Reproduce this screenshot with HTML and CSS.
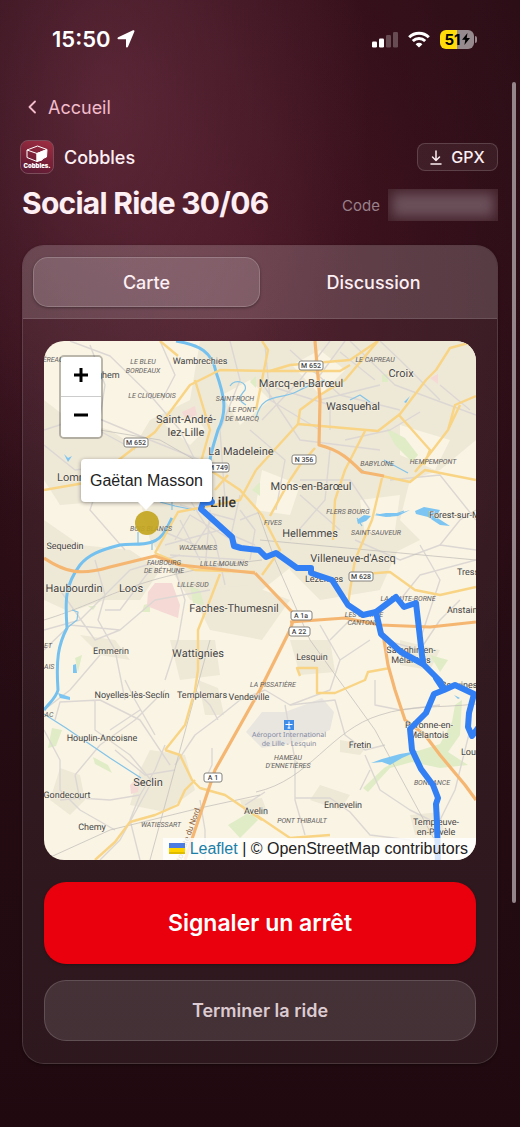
FILE: index.html
```html
<!DOCTYPE html>
<html lang="fr">
<head>
    <meta charset="UTF-8">
    <meta name="viewport" content="width=device-width, initial-scale=1.0">
    <title>Cobbles - Social Ride 30/06</title>
    <link rel="stylesheet" href="styles.css">
</head>
<body>
    <div class="status-bar">
        <div class="status-left">
            <span class="clock">15:50</span>
            <svg width="18" height="18" viewBox="0 0 18 18"><path d="M17.4 1.600 11 16.800c-.5 1-2 .8-2-.4V9.300H1.600C.4 9.300.1 7.700 1.200 7.200L16 .3c.9-.4 1.700.4 1.400 1.300z" fill="#fff"/></svg>
        </div>
        <div class="status-right">
            <svg width="26" height="17" viewBox="0 0 26 17">
                <rect x="0" y="10.500" width="5" height="6" rx="1.300" fill="#fff"/>
                <rect x="7" y="7.500" width="5" height="9" rx="1.300" fill="#fff"/>
                <rect x="14" y="4" width="5" height="12.500" rx="1.300" fill="#fff" opacity=".25"/>
                <rect x="21" y="1" width="5" height="15.500" rx="1.300" fill="#fff" opacity=".25"/>
            </svg>
            <svg width="22" height="17" viewBox="0 0 22 17" fill="none" stroke="#fff" stroke-width="3">
                <path d="M1.200 6.200a14 14 0 0 1 19.600 0"/>
                <path d="M4.800 10a8.900 8.900 0 0 1 12.400 0"/>
                <path d="M11 16.600 7.600 13.200a4.900 4.900 0 0 1 6.800 0z" fill="#fff" stroke="none"/>
            </svg>
            <div class="battery">
                <span>51</span>
                <svg width="8" height="12" viewBox="0 0 8 12"><path d="M5.500 0 0 6.800h3.300L2.400 12 8 5H4.700z" fill="#000"/></svg>
            </div>
        </div>
    </div>

    <main class="page">
        <a class="back" href="#">
            <svg width="8" height="14" viewBox="0 0 8 14" fill="none" stroke="currentColor" stroke-width="1.800" stroke-linecap="round" stroke-linejoin="round"><path d="M7 1.500 1.500 7 7 12.500"/></svg>
            Accueil
        </a>

        <div class="brand-row">
            <div class="brand">
                <div class="logo">
                    <svg width="22" height="17" viewBox="0 0 22 17" fill="none" stroke="#fff" stroke-width="1" stroke-linejoin="round">
                        <path d="M1 5 11.500 1 21 4.500 11 8.500zM1 5v7.500l10 4v-8"/>
                        <path d="M11 8.500 21 4.500l-.5 7.500-3.500 1.500-1 1.500-5 1.500z" fill="#fff"/>
                    </svg>
                    <span>Cobbles.</span>
                </div>
                <span class="brand-name">Cobbles</span>
            </div>
            <button class="gpx" type="button">
                <svg width="12" height="15" viewBox="0 0 12 15" fill="none" stroke="currentColor" stroke-width="1.500" stroke-linecap="round" stroke-linejoin="round"><path d="M6 1v9M2.500 7 6 10.500 9.500 7M1 14h10"/></svg>
                GPX
            </button>
        </div>

        <div class="title-row">
            <h1>Social Ride 30/06</h1>
            <div class="code">Code <span class="code-mask"></span></div>
        </div>

        <section class="card">
            <div class="tabs">
                <button class="tab active" type="button">Carte</button>
                <button class="tab" type="button">Discussion</button>
            </div>
            <div class="card-body">
                <div class="map">
                    <svg class="tiles" viewBox="44 341 432 519" preserveAspectRatio="xMidYMid slice">
                        <rect class="land" x="0" y="300" width="560" height="600"/>

                        <!-- zones urbaines -->
                        <g class="urban">
                            <path d="M200 341H476V440L440 470 410 480 400 520 420 540 380 560 330 575 300 560 262 590 230 610 190 600 165 560 150 540 135 480 120 470 150 420 190 400z"/>
                            <path d="M44 520 80 545 130 550 160 570 140 600 105 600 70 612 44 600z"/>
                            <path d="M44 400 70 420 110 430 140 450 120 500 60 505 44 480z"/>
                            <path d="M190 590 250 585 290 600 262 640 210 630z"/>
                            <path d="M150 750 185 755 195 790 165 812 130 805 140 770z"/>
                            <path d="M60 768 80 775 85 800 70 815 50 800z"/>
                            <path d="M170 640 215 640 220 675 180 680z"/>
                            <path d="M290 640 330 640 335 672 300 675z"/>
                            <path d="M290 530 350 520 400 545 380 590 320 600 290 570z"/>
                            <path d="M400 640 440 650 430 670 400 665zM340 740 368 745 360 755 340 752zM320 785 350 795 340 810 310 800zM240 800 262 798 268 815 245 815z"/>
                            <path d="M80 635 115 640 130 660 100 655zM198 680 218 688 224 715 205 715zM410 815 440 812 445 835 415 835z"/>
                        </g>
                        <path class="airfield" d="M246 732 262 712 285 712 312 702 322 698 334 712 330 730 300 742 262 748z"/>
                        <g class="fields">
                            <path d="M222 395 250 380 270 400 240 425zM262 470 300 485 290 515 255 510zM400 425 450 440 435 470 400 455zM360 500 400 495 395 530 365 535zM165 425 195 415 205 430 190 445z"/>
                            <path d="M292 365 320 350 345 370 320 395zM110 515 135 505 150 530 120 540z"/>
                        </g>

                        <g class="park">
                            <path d="M386 428 405 438 418 455 412 462 395 445z"/>
                            <path d="M363 788 384 768 408 754 440 744 452 722 455 705 462 700 460 735 448 752 468 765 440 768 412 762 390 768 368 792z"/>
                            <path d="M190 586 200 590 204 605 193 603zM144 605 150 603 150 612 142 612zM382 375 388 374 388 382 382 382zM252 490 260 482 260 496zM52 728 62 730 56 746 48 748zM93 757 108 765 112 773 95 764zM228 825 250 812 258 820 240 838zM75 658 82 655 78 672zM430 655 448 660 440 672zM88 606 96 606 93 610zM250 382 256 376 256 388z"/>
                        </g>
                        <path class="pink" d="M148 592 155 583 172 583 180 605 178 618 162 612 147 606zM182 412 195 406 197 415 186 420zM130 785 140 775 138 792 131 794zM430 378 438 374 438 384z"/>

                        <!-- routes secondaires -->
                        <g class="minor">
                            <path d="M70 341 110 356 150 395 180 430 200 470"/>
                            <path d="M90 345 105 385 98 430 135 450M44 430 90 415 150 440 205 462M160 341 175 375 162 400"/>
                            <path d="M230 341 240 380 220 430 225 500M44 445 75 470 120 465M100 480 90 510 125 550"/>
                            <path d="M350 341 395 385 476 415M330 341 300 380 262 420M290 350 340 395 400 410M260 380 300 440 380 450M320 400 380 385M345 341 320 375 300 365M340 352 375 380M380 341 400 360 440 400M440 385 470 410M345 440 390 430 420 412M265 345 270 400 320 430M276 388 330 405 330 430"/>
                            <path d="M250 430 285 460 276 510M330 450 325 500 290 540M300 480 350 480 370 510M300 495 340 530M390 480 440 475 476 520M355 540 400 560 440 545 476 550"/>
                            <path d="M190 500 215 540 225 585M165 545 220 530 255 545M180 520 200 560M175 540 190 515 240 545M160 530 195 545 215 515M180 505 235 520M210 510 205 570M240 495 230 540M170 555 245 560"/>
                            <path d="M95 560 105 595 98 620 115 650 125 700M60 590 95 640 120 630M150 570 120 610 105 610M175 570 185 600 178 640 165 680M44 650 70 625 120 630 155 600 210 590"/>
                            <path d="M100 655 70 690 44 710M44 630 80 620 130 570 180 555"/>
                            <path d="M55 720 60 702 100 700 140 720 170 765M125 680 135 700 155 735M165 690 135 720 100 745 75 775M95 700 95 730 130 755 155 785M110 730 140 710M44 730 60 760 60 790 80 810 115 830M60 800 80 798 110 800 140 795 155 770 165 745M140 795 130 820 140 860M75 775 80 800M150 785 120 840 100 860"/>
                            <path d="M175 765 195 735 215 720 240 700 265 690M218 720 210 705 195 690M200 800 205 830 205 860M205 780 212 765 212 748M115 750 145 775 175 770"/>
                            <path d="M265 690 290 705 335 700 345 735 365 750 385 745M285 705 295 760 295 800 305 835M295 798 330 798 350 812 370 835 410 840M365 755 380 790 410 810 430 820M360 790 370 770M265 792 245 805"/>
                            <path d="M290 705 330 690 340 660 320 625M340 660 370 640M384 640 420 650 440 620 460 600M420 545 440 580 420 640M440 545 460 520 476 510M375 680 375 705 400 710 440 705M470 730 455 790 435 830M476 560 420 575 400 600M350 620 330 640"/>
                            <path d="M240 510 255 530 250 560M240 520 260 512"/>
                        </g>
                        <g class="rail">
                            <path d="M258 512 275 560 310 640 375 730 440 850M210 640 150 860M44 860 110 830 200 808 260 795"/>
                            <path d="M256 792C310 780 330 730 380 715 410 705 440 708 476 704M44 620C110 600 130 575 262 560M260 540 476 560M100 430 160 440 195 460"/>
                        </g>

                        <!-- eau -->
                        <g class="water">
                            <path d="M176 341C200 345 212 352 216 372 224 395 228 410 218 430 212 450 208 460 210 475"/>
                            <path d="M172 518 166 530C155 548 140 543 120 545 100 550 88 555 80 565 65 585 65 600 67 628 58 645 56 660 58 690 56 698 50 702 44 710"/>
                        </g>
                        <g class="stream">
                            <path d="M44 714 66 728 110 758 141 778M230 386C235 378 248 382 245 390 238 398 238 400 246 405M256 418C262 392 280 400 296 392 320 380 312 385 325 380"/>
                            <path d="M160 502 175 506 195 510M172 480 172 510M138 543 138 532M152 540 152 550M350 400 360 395 370 402M384 460 408 473"/>
                            <path d="M67 628 77 620 78 612 72 610M357 518 362 526M376 514 390 516 404 511"/>
                        </g>
                        <g class="lake">
                            <path d="M374 515 386 513 400 513 410 510 398 516 386 517zM415 511 424 507 440 510 436 517 450 526 440 525 428 517 416 514zM371 763 382 759 400 754 418 751 402 758 390 765 382 762zM357 520 364 515 371 516 366 521 358 524zM64 454 68 458 72 456 68 462zM73 665 76 664 77 673 73 673zM404 402 410 396 406 403zM58 693 70 697 70 700 60 698zM356 466 366 472 362 473zM454 695 460 698 458 699z"/>
                        </g>

                        <!-- routes principales -->
                        <g class="major">
                            <path d="M44 490 90 482 125 455 155 432 190 385 220 370 270 371 290 365 350 360 378 341"/>
                            <path d="M195 380 210 430 200 465 185 480M160 341 178 356M262 341 268 350 256 410M265 371 340 371 350 365M378 341 345 380 320 395 300 410 298 424"/>
                            <path d="M256 470 298 424 378 431 400 414 426 380 436 370 450 348 476 341M398 414 430 450 424 465M476 396 455 405 448 430 425 460 415 472M448 430 460 405"/>
                            <path d="M382 476 410 482 425 470 476 480M365 431 345 470 335 500 333 540M382 478 372 520 355 560 350 590 348 605"/>
                            <path d="M270 516 290 480 300 465 315 448M155 553 178 512 240 500 256 470M155 553 195 570 255 572"/>
                            <path d="M220 574 210 600 198 630 198 670 195 690 185 725 165 750M165 750 180 755 192 780 200 788 225 795 262 820M195 780 185 790 178 805 155 815 130 822 115 842 95 860"/>
                            <path d="M350 575 390 572 415 590 440 595 476 587M311 570 330 580 340 590M210 470 240 490 262 515 280 550 262 575M228 475 215 490"/>
                            <path d="M300 676 297 668 317 668 317 693 335 693 365 680 368 672 390 668M256 815 290 838 330 835"/>
                        </g>
                        <g class="highway">
                            <path d="M44 558C65 572 80 576 110 567L155 556 180 565 255 573"/>
                            <path d="M315 341 320 400 319 445C340 450 350 460 362 472L384 476"/>
                            <path d="M255 573 295 615 290 630 260 690 215 770 185 860M290 622 345 618 380 625 430 627 476 622"/>
                            <path d="M377 615 384 640 388 665 395 690 405 720 425 735 440 755 465 785 476 800"/>
                        </g>

                        <g class="shield">
                            <rect x="124" y="438" width="24" height="9" rx="2"/><text x="136" y="445">M 652</text>
                            <rect x="299" y="361" width="24" height="9" rx="2"/><text x="311" y="368">M 652</text>
                            <rect x="292" y="455" width="24" height="9" rx="2"/><text x="304" y="462">N 356</text>
                            <rect x="206" y="463" width="23" height="9" rx="2"/><text x="218" y="470">M 749</text>
                            <rect x="349" y="572" width="24" height="9" rx="2"/><text x="361" y="579">M 628</text>
                            <rect x="291" y="611" width="21" height="9" rx="2"/><text x="301" y="618">A 1a</text>
                            <rect x="289" y="627" width="21" height="9" rx="2"/><text x="299" y="634">A 22</text>
                            <rect x="204" y="773" width="18" height="9" rx="2"/><text x="213" y="780">A 1</text>
                        </g>

                        <g class="district">
                            <text x="53" y="362">ÉREAU</text>
                            <text x="143" y="364">LE BLEU</text><text x="143" y="373">BORDEAUX</text>
                            <text x="152" y="398">LE CLIQUENOIS</text>
                            <text x="235" y="401">SAINT-ROCH</text>
                            <text x="242" y="412">LE PONT</text><text x="242" y="421">DE MARCQ</text>
                            <text x="375" y="362">LE CAPREAU</text>
                            <text x="377" y="466">BABYLONE</text>
                            <text x="433" y="464">HEMPEMPONT</text>
                            <text x="348" y="514">FLERS BOURG</text>
                            <text x="273" y="525">FIVES</text>
                            <text x="376" y="535">SAINT-SAUVEUR</text>
                            <text x="151" y="531">BOIS BLANCS</text>
                            <text x="198" y="550">WAZEMMES</text>
                            <text x="164" y="565">FAUBOURG</text><text x="164" y="573">DE BÉTHUNE</text>
                            <text x="224" y="566">LILLE-MOULINS</text>
                            <text x="193" y="587">LILLE-SUD</text>
                            <text x="408" y="601">LA HAUTE-BORNE</text>
                            <text x="364" y="617">LES QUATRE</text><text x="363" y="625">CANTONS</text>
                            <text x="48" y="648">ET</text><text class="left" x="44" y="669">AIS</text><text x="49" y="717">AC</text>
                            <text x="273" y="687">LA PISSATIÈRE</text>
                            <text x="288" y="760">HAMEAU</text><text x="288" y="768">D'ENNETIÈRES</text>
                            <text x="432" y="785">BONNANCE</text>
                            <text x="302" y="823">PONT THIBAULT</text>
                            <text x="161" y="827">WATIESSART</text>
                        </g>

                        <g class="village">
                            <text x="200" y="364">Wambrechies</text>
                            <text x="97" y="378">Verlinghem</text>
                            <text x="65" y="549">Sequedin</text>
                            <text x="111" y="654">Emmerin</text>
                            <text x="312" y="660">Lesquin</text>
                            <text x="132" y="698">Noyelles-lès-Seclin</text>
                            <text x="202" y="698">Templemars</text>
                            <text x="249" y="700">Vendeville</text>
                            <text x="102" y="741">Houplin-Ancoisne</text>
                            <text x="360" y="748">Fretin</text>
                            <text x="67" y="798">Gondecourt</text>
                            <text x="92" y="830">Chemy</text>
                            <text x="256" y="814">Avelin</text>
                            <text x="343" y="808">Ennevelin</text>
                            <text x="429" y="728">Péronne-en-</text><text x="429" y="738">Mélantois</text>
                            <text x="411" y="653">Sainghin-en-</text><text x="411" y="663">Mélantois</text>
                            <text x="436" y="825">Templeuve-</text><text x="436" y="835">en-Pévèle</text>
                            <text x="324" y="582">Lezennes</text>
                            <text x="459" y="688">Bouvines</text>
                            <text class="left" x="457" y="575">Tress</text>
                            <text class="left" x="447" y="613">Anstain</text>
                            <text class="left" x="461" y="755">Lou</text>
                            <text class="left" x="429" y="518">Forest-sur-M</text>
                        </g>

                        <g class="town">
                            <text x="401" y="377">Croix</text>
                            <text x="301" y="387">Marcq-en-Barœul</text>
                            <text x="353" y="410">Wasquehal</text>
                            <text x="186" y="423">Saint-André-</text><text x="186" y="436">lez-Lille</text>
                            <text x="241" y="455">La Madeleine</text>
                            <text class="left" x="57" y="481">Lomme</text>
                            <text x="311" y="490">Mons-en-Barœul</text>
                            <text x="310" y="537">Hellemmes</text>
                            <text x="353" y="562">Villeneuve-d'Ascq</text>
                            <text x="74" y="592">Haubourdin</text>
                            <text x="131" y="592">Loos</text>
                            <text x="234" y="612">Faches-Thumesnil</text>
                            <text x="198" y="657">Wattignies</text>
                            <text x="148" y="786">Seclin</text>
                        </g>
                        <text class="city" x="223" y="507">Lille</text>
                        <text class="road-name" x="0" y="0" transform="translate(189 840) rotate(-70)">Autoroute du Nord</text>

                        <g class="airport">
                            <rect x="284" y="720" width="10" height="10"/>
                            <path d="M289 721.500v7M285.500 724.500h7M287.500 728h3"/>
                            <text x="289" y="737">Aéroport International</text>
                            <text x="289" y="746">de Lille - Lesquin</text>
                        </g>

                        <!-- parcours -->
                        <g class="route">
                            <path d="M212 502 203 503 201 509 232 537 234 546 241 548 259 550 266 557 276 553 297 568 311 568 311 573 332 580 348 605 363 615 376 612 396 597 404 607 416 603 423 664"/>
                            <path d="M376 612 381 634 401 652 423 664 440 681 444 690 455 685 474 694 469 713 468 727 472 736 478 728M436 678 444 690 434 694 426 713 410 729 412 750 421 769 433 785 438 798 436 804 437 823 438 862"/>
                        </g>
                        <circle class="rider" cx="147" cy="523" r="12"/>
                    </svg>

                    <div class="zoom-control">
                        <button type="button" aria-label="Zoom avant"><svg width="16" height="16" viewBox="0 0 16 16"><path d="M8 1v14M1 8h14"/></svg></button>
                        <button type="button" aria-label="Zoom arrière"><svg width="16" height="16" viewBox="0 0 16 16"><path d="M1 8h14"/></svg></button>
                    </div>
                    <div class="tooltip">Gaëtan Masson</div>
                    <div class="attribution">
                        <svg width="16" height="11" viewBox="0 0 16 11"><path fill="#4c7be1" d="M0 0h16v6H0z"/><path fill="#ffd500" d="M0 5h16v4H0z"/><path fill="#e0bc00" d="M0 9h16v2H0z"/></svg>
                        <a href="#">Leaflet</a> | © OpenStreetMap contributors
                    </div>
                </div>

                <button class="btn btn-stop" type="button">Signaler un arrêt</button>
                <button class="btn btn-end" type="button">Terminer la ride</button>
            </div>
        </section>
    </main>
    <div class="scroll-thumb"></div>
</body>
</html>
```
FILE: styles.css
```css
* {
    margin: 0;
    padding: 0;
    box-sizing: border-box;
}
body {
    position: relative;
    min-height: 100vh;
    font-family: Inter, "Noto Sans", sans-serif;
    color: #fdeff3;
    background:
        radial-gradient(ellipse 260px 420px at 110px 110px, rgba(112, 52, 72, 0.62), rgba(112, 52, 72, 0) 100%),
        radial-gradient(ellipse 330px 560px at 240px 300px, rgba(92, 26, 44, 0.55), rgba(92, 26, 44, 0) 100%),
        linear-gradient(180deg, #2c0e17 0%, #270c14 50%, #200a10 100%);
}
svg {
    display: block;
}
button {
    font-family: inherit;
    color: inherit;
    border: none;
    background: none;
    cursor: pointer;
}

/* barre de statut */
.status-bar {
    display: flex;
    justify-content: space-between;
    align-items: center;
    height: 78px;
    padding: 0 43px 0 52px;
    color: #fff;
}
.status-left, .status-right {
    display: flex;
    align-items: center;
}
.status-left {
    gap: 6px;
}
.status-right {
    gap: 10px;
}
.clock {
    font-size: 22px;
    font-weight: 600;
}
.battery {
    position: relative;
    display: flex;
    align-items: center;
    justify-content: center;
    gap: 1px;
    width: 34px;
    height: 19px;
    margin-right: 3px;
    border-radius: 6px;
    background: linear-gradient(90deg, #ffdc0a 51%, #968a8f 51%);
    color: #000;
    font-size: 15px;
    font-weight: 700;
}
.battery::after {
    content: "";
    position: absolute;
    right: -3px;
    top: 6px;
    width: 2px;
    height: 7px;
    border-radius: 0 2px 2px 0;
    background: #968a8f;
}

/* en-tête */
.page {
    padding: 0 22px 64px;
}
.back {
    display: inline-flex;
    align-items: center;
    gap: 12px;
    height: 58px;
    padding-left: 6px;
    font-size: 18px;
    color: #f2bccb;
    text-decoration: none;
}
.brand-row, .title-row, .brand {
    display: flex;
    align-items: center;
}
.brand-row, .title-row {
    justify-content: space-between;
}
.brand-row {
    height: 42px;
}
.brand {
    gap: 10px;
    margin-left: -2px;
}
.brand-name {
    font-size: 18px;
    font-weight: 500;
}
.logo {
    display: flex;
    flex-direction: column;
    align-items: center;
    width: 34px;
    height: 34px;
    padding-top: 4px;
    border: 1px solid #7d4c5a;
    border-radius: 8px;
    background: linear-gradient(200deg, #a02f43, #751f36 60%, #541c35);
}
.logo span {
    font-size: 6px;
    font-weight: 900;
    line-height: 7px;
    color: #fff;
}
.gpx {
    display: flex;
    align-items: center;
    justify-content: center;
    gap: 9px;
    width: 81px;
    height: 28px;
    border: 1px solid rgba(255, 255, 255, 0.16);
    border-radius: 8px;
    background: rgba(255, 255, 255, 0.06);
    font-size: 16px;
    font-weight: 500;
}
.title-row {
    height: 50px;
    margin-bottom: 17px;
}
h1 {
    font-size: 30px;
    font-weight: 700;
    line-height: 40px;
    letter-spacing: -0.025em;
}
.code {
    display: flex;
    align-items: center;
    gap: 8px;
    font-size: 15px;
    color: #99808a;
    padding-top: 4px;
}
.code-mask {
    width: 110px;
    height: 32px;
    background: #6b505a;
    box-shadow: inset 0 0 12px 4px #43202a;
}

/* carte principale */
.card {
    overflow: hidden;
    border: 1px solid rgba(255, 255, 255, 0.13);
    border-radius: 22px;
    background: rgba(255, 255, 255, 0.06);
    box-shadow: 0 1px 3px rgba(0, 0, 0, 0.4);
}
.tabs {
    display: grid;
    grid-template-columns: 1fr 1fr;
    padding: 11px 10px;
    border-bottom: 1px solid rgba(255, 255, 255, 0.12);
    background: rgba(255, 255, 255, 0.14);
}
.tab {
    height: 50px;
    border: 1px solid transparent;
    border-radius: 15px;
    font-size: 18px;
    font-weight: 500;
}
.tab.active {
    border-color: rgba(255, 255, 255, 0.18);
    background: rgba(255, 255, 255, 0.13);
    box-shadow: 0 1px 3px rgba(0, 0, 0, 0.35);
}
.card-body {
    display: flex;
    flex-direction: column;
    padding: 22px 21px;
}
.map {
    position: relative;
    height: 519px;
    margin-bottom: 22px;
    overflow: hidden;
    border-radius: 20px;
    font-family: "Liberation Sans", sans-serif;
    color: #222;
}
.btn {
    border-radius: 22px;
    font-size: 18px;
    font-weight: 600;
}
.btn-stop {
    height: 82px;
    margin-bottom: 16px;
    background: #e9000c;
    color: #fff;
    font-size: 23px;
    box-shadow: 0 1px 3px rgba(0, 0, 0, 0.3);
}
.btn-end {
    height: 61px;
    border: 1px solid rgba(255, 255, 255, 0.15);
    background: rgba(255, 255, 255, 0.11);
    color: #dccbd1;
}

/* fond de carte */
.tiles {
    width: 100%;
    height: 100%;
    font-family: Roboto, sans-serif;
    text-anchor: middle;
    text-rendering: geometricPrecision;
}
.land { fill: #faf4e4; }
.urban { fill: #eee8d7; }
.airfield { fill: #e9e6e0; }
.fields { fill: #faf4e4; }
.park { fill: #dfecc6; }
.pink { fill: #f5d9d5; }
.minor, .rail, .water, .stream, .major, .highway, .route {
    fill: none;
    stroke-linejoin: round;
}
.minor { stroke: #dcd7d3; stroke-width: 1.4; }
.rail { stroke: #c5c1bb; stroke-width: 0.8; }
.water { stroke: #74c0ee; stroke-width: 3; }
.stream { stroke: #83c4e8; stroke-width: 1.2; }
.lake { fill: #7cc4f2; }
.major { stroke: #f8d484; stroke-width: 2.4; }
.highway { stroke: #f5b671; stroke-width: 3.2; }
.route {
    stroke: #3380f5;
    stroke-width: 6;
    stroke-linecap: round;
}
.rider {
    fill: #c2a51f;
    fill-opacity: 0.92;
}
.shield {
    font-size: 7px;
    font-weight: 500;
}
.shield rect { fill: #fff; stroke: #85827c; }
.shield text { fill: #444; }
.district {
    font-size: 7px;
    font-style: italic;
}
.district text { fill: #62605e; }
.village { font-size: 9px; }
.town { font-size: 11px; }
.village text, .town text {
    fill: #444;
    stroke: #faf4e4;
    stroke-width: 1px;
    paint-order: stroke;
}
.tiles .left { text-anchor: start; }
.city {
    fill: #333;
    font-size: 14px;
    font-weight: 500;
}
.road-name {
    fill: #8b603c;
    font-size: 8px;
}
.airport {
    font-family: "Noto Sans", sans-serif;
    font-size: 7px;
}
.airport rect { fill: #3f8be8; }
.airport path { stroke: #fff; }
.airport text { fill: #8388a0; }

/* contrôles leaflet */
.zoom-control {
    position: absolute;
    top: 14px;
    left: 15px;
    border: 2px solid rgba(0, 0, 0, 0.25);
    border-radius: 5px;
    overflow: hidden;
    background-clip: padding-box;
}
.zoom-control button {
    display: flex;
    align-items: center;
    justify-content: center;
    width: 40px;
    height: 40px;
    padding-bottom: 4px;
    background: #fff;
}
.zoom-control button:first-child {
    border-bottom: 1px solid #ccc;
}
.zoom-control path {
    stroke: #000;
    stroke-width: 3;
}
.tooltip {
    position: absolute;
    top: 118px;
    left: 37px;
    padding: 0 9px;
    border-radius: 4px;
    background: #fff;
    box-shadow: 0 1px 4px rgba(0, 0, 0, 0.4);
    font-size: 16px;
    line-height: 43px;
    white-space: nowrap;
}
.tooltip::after {
    content: "";
    position: absolute;
    top: 100%;
    left: 50%;
    margin-left: -8px;
    border: 8px solid transparent;
    border-top-color: #fff;
}
.attribution {
    position: absolute;
    right: 0;
    bottom: 0;
    padding: 0 8px 0 6px;
    background: rgba(255, 255, 255, 0.8);
    font-size: 16px;
    line-height: 22px;
    white-space: nowrap;
}
.attribution svg {
    display: inline-block;
}
.attribution a {
    color: #1b7fa8;
    text-decoration: none;
}
.scroll-thumb {
    position: absolute;
    top: 82px;
    right: 4px;
    bottom: 225px;
    width: 4px;
    border-radius: 2px;
    background: #93858a;
}
```
